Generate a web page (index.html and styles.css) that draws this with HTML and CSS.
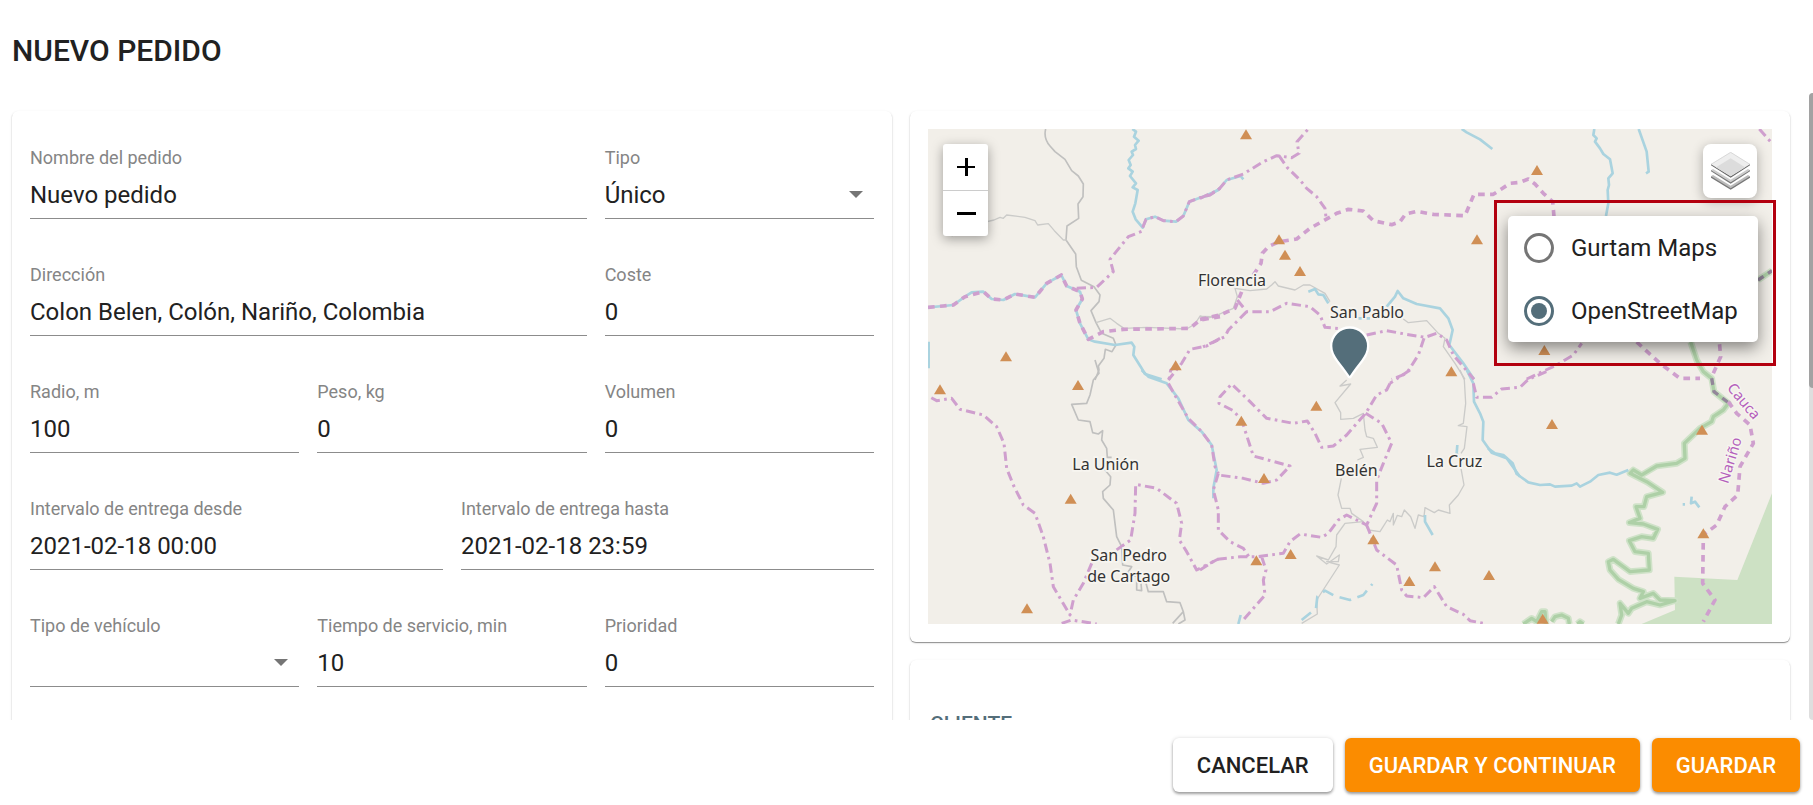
FILE: index.html
```html
<!DOCTYPE html>
<html lang="es">
<head>
<meta charset="utf-8">
<meta name="viewport" content="width=device-width, initial-scale=1">
<title>Nuevo pedido</title>
<link rel="stylesheet" href="styles.css">
</head>
<body class="page">
<header class="header"><h1 class="title">NUEVO PEDIDO</h1></header>
<main class="main">
  <div class="scroller">
    <form class="card form" id="order-form">
      <div class="row">
        <div class="field wide"><label for="name">Nombre del pedido</label><input id="name" type="text" value="Nuevo pedido"></div>
        <div class="field"><label for="type">Tipo</label><select id="type"><option>Único</option></select><svg class="arrow" viewBox="0 0 14 7"><path d="M0 0H14L7 7Z"/></svg></div>
      </div>
      <div class="row">
        <div class="field wide"><label for="address">Dirección</label><input id="address" type="text" value="Colon Belen, Colón, Nariño, Colombia"></div>
        <div class="field"><label for="cost">Coste</label><input id="cost" type="text" value="0"></div>
      </div>
      <div class="row">
        <div class="field"><label for="radius">Radio, m</label><input id="radius" type="text" value="100"></div>
        <div class="field"><label for="weight">Peso, kg</label><input id="weight" type="text" value="0"></div>
        <div class="field"><label for="volume">Volumen</label><input id="volume" type="text" value="0"></div>
      </div>
      <div class="row halves">
        <div class="field"><label for="from">Intervalo de entrega desde</label><input id="from" type="text" value="2021-02-18 00:00"></div>
        <div class="field"><label for="to">Intervalo de entrega hasta</label><input id="to" type="text" value="2021-02-18 23:59"></div>
      </div>
      <div class="row">
        <div class="field"><label for="vehicle">Tipo de vehículo</label><select id="vehicle"><option></option></select><svg class="arrow" viewBox="0 0 14 7"><path d="M0 0H14L7 7Z"/></svg></div>
        <div class="field"><label for="service">Tiempo de servicio, min</label><input id="service" type="text" value="10"></div>
        <div class="field"><label for="priority">Prioridad</label><input id="priority" type="text" value="0"></div>
      </div>
    </form>
    <div class="side">
      <section class="card">
        <div class="map">
          <svg class="tiles" viewBox="0 0 2532 1485" preserveAspectRatio="xMidYMid slice">
            <defs>
              <path id="peak" d="M0-16L18 14H-18Z"/>
              <path id="reserve" d="M602-84L620-30L640 5L665 25L672 65L715 100L700 120L670 140L665 155L630 175L583 220L585 265L560 280L500 288L455 315L430 300L420 310L470 335L518 367L470 380L462 410L438 410L450 445L418 458L460 462L503 478L490 505L455 500L418 512L435 545L475 550L478 600L420 605L370 568L355 575L360 600L385 628L430 655L460 665L450 685L490 670L510 690L555 692L510 705L470 695L425 715L415 730L390 700L395 735L385 762M100 762L125 745L140 755L155 725L165 725L168 762M185 755L195 740L215 735L235 745L238 762M262 762L270 755L280 762M804-270L846-298"/>
            </defs>

            <!-- park and green boundary -->
            <g transform="translate(1686 723)">
              <path class="park" d="M553 620L742 630L846 370V762H455L555 720Z"/>
              <use href="#reserve" class="halo"/>
              <use href="#reserve" class="core"/>
            </g>

            <!-- roads -->
            <g class="road">
              <g transform="translate(-84 -87)">
                <path class="major" d="M437 87Q430 115 450 138L465 155L495 178L515 212L535 228L550 252L549 290L534 312L536 355L501 378L498 420L527 462L529 500L544 541L582 560L600 585L597 605L573 632L588 668L605 700L640 715L648 735L636 755L616 748L612 775L595 798L597 810L585 840"/>
                <path d="M155 408L240 370L282 360L300 352L310 355L320 345L375 352L405 362L413 375L445 371L463 392L490 420H500M588 668L630 655L650 670L672 685L740 682L860 687L885 672L900 648L920 655L960 645"/>
              </g>
              <path transform="translate(816 -87)" d="M0 649L40 650L100 625L112 590L105 565L150 572L200 567L215 555L225 545L235 558L285 570L310 555L330 555L375 580L390 605M610 657L625 668L680 662L715 700L735 715L730 740L765 790L795 838"/>
              <path transform="translate(-84 723)" class="major" d="M585-30L597 10L580 30L570 75L560 100L515 103L535 150L570 155L578 188L595 192L608 182L605 210L620 235L622 262H635M615 300L632 320L630 345L608 365L610 385L640 420L650 500L665 530L668 585L695 590L685 605L710 620L710 660L725 662L723 640M738 640L745 665L790 665L800 695L840 698L850 725L855 750L835 762M850 725L818 760"/>
              <path transform="translate(816 723)" d="M440 30L420 48L452 42L405 98L422 128V148L460 145L490 130L495 180L500 200L520 205L532 232L480 238L490 262L472 270M780 0L793 30L797 100L790 160L775 167L801 170L793 235L783 250M783 295L792 345L775 375L748 405L750 430L715 420L703 428L675 413L672 440L655 435L645 475L632 440L613 420L605 440L592 436L580 465V430L570 455L562 450L540 485L505 480L490 455L455 430L450 415H425L414 375L424 325M490 455L435 460L410 495L408 530L385 570L350 558L380 582L418 555L415 575L380 575L418 585L350 690L352 732L305 760"/>
            </g>

            <!-- rivers -->
            <g class="river">
              <path transform="translate(-84 -87)" d="M697 87L708 95L702 110L716 122L705 135L708 147L695 155L699 165L686 180L692 195L685 205L698 215L690 228L708 250L698 262L713 270L706 310L698 335L707 358L728 383L738 358L765 350L790 362L828 365L850 348L868 305L900 293L930 285L960 265M84 622L130 618L160 615L195 590L215 577L250 575L275 597L310 600L345 582L405 592L440 550L484 525L500 558L540 575L547 597L528 630L540 670L565 718L585 725L645 735L695 728L703 740L700 765L722 800L735 822L785 838M86 725V805"/>
              <path transform="translate(816 -87)" d="M0 295L55 270L80 240L122 228L130 238M785 87L800 97L840 118L877 147M325 575L345 567L355 583L370 585L385 610M475 655H510M560 620L585 590L593 573L610 595L650 612L720 625L745 655L758 690L748 735L790 790L822 838"/>
              <path transform="translate(1656 -147)" d="M343 147L340 165L350 175L345 185L360 205L370 222L390 238L398 280L385 295L387 315L383 330L385 370L378 408M476 147L500 215L506 275L498 280"/>
              <path transform="translate(-84 723)" d="M725 0L745 20L800 40L835 85L865 150L905 185L935 225L950 300L940 355V385"/>
              <path transform="translate(816 723)" d="M800 0L820 40L822 95L840 130L850 155L848 210L875 248L920 265L960 320M122 735L115 762M675 435V455L698 495M772 225L770 250L785 280"/>
              <path transform="translate(816 723)" class="seasonal" d="M305 750L348 715L352 680L375 662L405 678L450 690L490 675L517 642"/>
              <path transform="translate(1686 723)" d="M-6 235L15 250L40 255L68 280L80 312L115 337L150 345L180 343L195 350L245 347L260 340L270 350L300 335L325 315L360 308L380 314L415 300M605 380L603 400L615 395L628 412M578 403H585"/>
            </g>

            <!-- municipal boundaries -->
            <g class="border">
              <path transform="translate(-84 -87)" d="M728 383L738 358L765 350L790 362L828 365L850 348L868 305L900 293L930 285L960 265M530 565L590 562L640 515L630 478L685 410L728 393M960 715L920 738L870 748L845 790L805 840"/>
              <path transform="translate(816 -87)" d="M0 295L55 270L80 240L130 222L190 185L230 167L275 173L297 160L291 125L325 87M237 167L262 203L300 240L320 265L350 290L375 325L378 352M112 600L140 635L210 635L260 610L330 620L360 645L375 682L420 686M500 705L560 692L620 703L675 712L710 700L740 720L760 765L822 838M140 635L85 690L75 710L0 745M672 715L655 765L620 820L575 838"/>
              <path transform="translate(1656 -147)" d="M140 897L230 855L280 825L305 790M838 147L876 190"/>
              <path transform="translate(-84 723)" d="M830-10L812 0L805 40L830 85L865 145L905 185L935 225L945 290L955 310M955 567L890 600L860 545L838 510L845 460L830 400L770 355L707 343L705 430L692 510L635 550M575 580L550 640L520 690L510 735L460 650L450 580L430 500L405 430L370 405L340 345L320 295L312 220L290 170L250 135L180 118L155 85L110 92L88 80M485 760L515 750L590 762"/>
              <path transform="translate(816 723)" d="M55 310L40 360L55 420V480L90 515L130 535L150 565M570 40L560 60L530 75L497 130L440 195L400 228L365 232L345 190L322 153L280 160L200 145L150 95L95 42L60 80L57 100L100 122L125 150L160 258L270 288L230 330L190 340L130 325L55 315M630 0L570 40M497 130L545 160L575 220L550 280L530 330V400L500 465L440 435L415 450L385 490L365 502L300 492L270 515L250 550L170 560L120 560L50 568L0 600M500 465L530 540L590 585L605 660L620 678L670 683L703 650L740 710L790 733L810 752L860 762M185 560L198 600L190 630L195 675L130 750M820 40L830 82L875 82L905 57L960 52L985 28L1050 0"/>
            </g>
            <g class="border province">
              <path transform="translate(-84 -87)" d="M84 622L130 618L160 615L195 590L250 575L275 597L310 600L345 582L405 592L440 550L484 525L500 558L540 575L547 597L528 630L540 670L565 718L610 695L670 688L870 685L900 660L960 650"/>
              <path transform="translate(816 -87)" d="M0 658L60 645L105 625L127 570M160 525L183 490L187 460L205 440L237 425L290 417L330 385L410 340L445 328L490 333L520 362L575 374L600 365L617 342L650 334L700 343L795 347L822 283L880 283L930 250L960 247L985 237L1005 252L1030 280L1058 305L1062 350"/>
              <path transform="translate(1656 -147)" d="M470 786L540 850L600 895L660 895M700 880L722 830L718 786"/>
              <path transform="translate(1686 723)" d="M715 95L740 130L780 165L790 220L750 290L743 375L705 410L680 465L640 495L638 640L675 690L640 755"/>
            </g>
            <path class="edge" d="M2351 748L2358 788L2400 820M2490 453L2532 425"/>

            <g class="peaks">
              <use href="#peak" x="234" y="683"/><use href="#peak" x="743" y="710"/>
              <use href="#peak" x="954" y="17"/><use href="#peak" x="1053" y="332"/><use href="#peak" x="1071" y="378"/><use href="#peak" x="1116" y="427"/><use href="#peak" x="1647" y="332"/><use href="#peak" x="1570" y="728"/>
              <use href="#peak" x="1827" y="124"/><use href="#peak" x="1849" y="664"/>
              <use href="#peak" x="36" y="782"/><use href="#peak" x="450" y="769"/><use href="#peak" x="428" y="1110"/><use href="#peak" x="297" y="1439"/>
              <use href="#peak" x="1165" y="831"/><use href="#peak" x="940" y="876"/><use href="#peak" x="1008" y="1048"/><use href="#peak" x="985" y="1295"/><use href="#peak" x="1088" y="1276"/><use href="#peak" x="1336" y="1232"/><use href="#peak" x="1444" y="1357"/><use href="#peak" x="1521" y="1313"/><use href="#peak" x="1683" y="1339"/>
              <use href="#peak" x="1872" y="886"/><use href="#peak" x="2322" y="903"/><use href="#peak" x="2326" y="1214"/><use href="#peak" x="1844" y="1470"/>
            </g>

            <g class="places">
              <text x="912" y="470">Florencia</text>
              <text x="1317" y="567">San Pablo</text>
              <text x="533" y="1023">La Unión</text>
              <text x="1285" y="1041">Belén</text>
              <text x="1579" y="1013">La Cruz</text>
              <text x="602" y="1296">San Pedro</text>
              <text x="602" y="1360">de Cartago</text>
            </g>
            <g class="regions">
              <text transform="translate(2436 826) rotate(50)">Cauca</text>
              <text transform="translate(2421 998) rotate(-73)">Nariño</text>
            </g>
            <path class="pin" d="M1265 741C1240 702 1213 682 1213 651a52 52 0 0 1 104 0C1317 682 1290 702 1265 741Z"/>
          </svg>
          <div class="zoom">
            <button type="button" aria-label="Acercar"><svg viewBox="0 0 18 18"><path d="M0 8H18V10H0ZM8 0H11V18H8Z"/></svg></button>
            <button type="button" aria-label="Alejar"><svg viewBox="0 0 18 18"><path d="M0 7H19V10H0Z"/></svg></button>
          </div>
          <button class="layers" type="button" aria-label="Capas">
            <svg viewBox="0 0 117 113">
              <path fill="#777" d="M0 77L59 113L117 77V73H0Z"/><path fill="#bbb" d="M59 36L117 73L59 109L0 73Z"/>
              <path fill="#fff" d="M0 65L59 101L117 65V58H0Z"/>
              <path fill="#777" d="M0 58L59 95L117 58V54H0Z"/><path fill="#ccc" d="M59 18L117 55L59 91L0 55Z"/>
              <path fill="#fff" d="M0 47L59 83L117 47V40H0Z"/>
              <path fill="#666" d="M0 40L59 77L117 40V36H0Z"/><path fill="#eee" d="M59 0L117 37L59 73L0 37Z"/>
              <path fill="#dcdcdc" d="M59 19L102 46L59 73L15 46Z"/>
              <path fill="none" stroke="#ccc" stroke-width="2" d="M0 37L59 1L117 37"/>
            </svg>
          </button>
          <div class="callout">
            <div class="menu">
              <label><input type="radio" name="layer">Gurtam Maps</label>
              <label><input type="radio" name="layer" checked>OpenStreetMap</label>
            </div>
          </div>
        </div>
      </section>
      <section class="card client"><h2 class="subtitle">CLIENTE</h2></section>
    </div>
  </div>
  <div class="scrollbar"><div class="thumb"></div></div>
</main>
<footer class="footer">
  <button class="button" type="button">CANCELAR</button>
  <button class="button primary" type="button">GUARDAR Y CONTINUAR</button>
  <button class="button primary" type="submit" form="order-form">GUARDAR</button>
</footer>
</body>
</html>
```

FILE: styles.css
```css
* { box-sizing: border-box; }

.page {
  display: flex;
  flex-direction: column;
  height: 100vh;
  margin: 0;
  overflow: hidden;
  background: #fff;
  color: #212121;
  font-family: Roboto, "Liberation Sans", sans-serif;
  font-size: 24px;
}

.header { padding: 31px 12px 22px; }
.title { margin: 0; font-size: 30px; font-weight: 500; line-height: 40px; }

.main { display: flex; flex: 1; min-height: 0; }
.scroller {
  display: grid;
  flex: 1;
  grid-template-columns: 1fr 1fr;
  gap: 18px;
  padding: 18px 19px 18px 12px;
  overflow-y: auto;
  scrollbar-width: none;
}
.scrollbar { width: 4px; border-radius: 4px 0 0 4px; background: #dedede; }
.thumb { height: 47%; border-radius: 4px 0 0 4px; background: #a2a2a2; }

.card {
  padding: 18px;
  border-radius: 6px;
  background: #fff;
  box-shadow: 0 1px 1px rgba(0, 0, 0, .4), 0 1px 3px rgba(0, 0, 0, .1);
}
.side { display: flex; flex-direction: column; gap: 18px; }
.client { min-height: 420px; }
.subtitle { margin: 32px 2px 0; color: #546e7a; font-size: 21px; font-weight: 500; line-height: 28px; }

.form { display: flex; flex-direction: column; gap: 33px; min-height: 900px; padding-top: 24px; }
.row { display: grid; grid-template-columns: repeat(3, 1fr); gap: 18px; }
.halves { grid-template-columns: 1fr 1fr; }
.wide { grid-column: span 2; }
.field {
  display: grid;
  grid-template-rows: 36px 47px;
  min-width: 0;
  border-bottom: 1px solid #8c8c8c;
}
.field label { padding-top: 11px; color: #858585; font-size: 18px; line-height: 24px; }
.field input, .field select {
  grid-area: 2 / 1;
  width: 100%;
  margin: 0;
  padding: 0;
  border: 0;
  outline: 0;
  appearance: none;
  background: none;
  color: #212121;
  font: inherit;
}
.field input { padding-top: 1px; }
.arrow { grid-area: 2 / 1; align-self: center; justify-self: end; width: 14px; margin-right: 11px; fill: #757575; pointer-events: none; }

.map { position: relative; aspect-ratio: 844 / 495; background: #f2efe9; }
.tiles { display: block; width: 100%; height: 100%; }
.tiles path { stroke-linejoin: round; }
.park { fill: #cde1c4; }
.halo { fill: none; stroke: #cfe2c8; stroke-width: 20; }
.core { fill: none; stroke: #aed0a7; stroke-width: 10; }
.road { fill: none; stroke: #cbcbc9; stroke-width: 4; }
.major { stroke: #c0c0bf; stroke-width: 5; }
.river { fill: none; stroke: #aad3df; stroke-width: 8; }
.seasonal { stroke-dasharray: 36 20; }
.border { fill: none; stroke: #cf9fce; stroke-width: 9; stroke-dasharray: 28 13 8 13; }
.province { stroke-width: 11; stroke-dasharray: 20 16; }
.edge { fill: none; stroke: #93869a; stroke-width: 10; stroke-dasharray: 20 16; }
.peaks { fill: #d08f55; }
.places, .regions { stroke: #f7f5f0; paint-order: stroke; text-anchor: middle; }
.places { fill: #333; stroke-width: 10; font: 48px "Noto Sans", sans-serif; }
.regions { fill: #b45fbc; stroke-width: 8; font: 44px "Noto Sans", sans-serif; }
.pin { fill: #546e7a; stroke: #fff; stroke-width: 14; paint-order: stroke; }

.zoom {
  position: absolute;
  top: 15px;
  left: 15px;
  width: 45px;
  border-radius: 3px;
  background: #fff;
  box-shadow: 0 3px 12px rgba(0, 0, 0, .35);
}
.zoom button {
  display: flex;
  align-items: center;
  justify-content: center;
  width: 100%;
  height: 46px;
  padding: 0;
  border: 0;
  background: none;
}
.zoom button + button { border-top: 1px solid #ccc; }
.zoom svg { width: 18px; overflow: visible; }

.layers {
  position: absolute;
  top: 15px;
  right: 15px;
  display: flex;
  align-items: center;
  justify-content: center;
  width: 54px;
  height: 54px;
  padding: 0;
  border: 0;
  border-radius: 8px;
  background: #fff;
  box-shadow: 0 3px 12px rgba(0, 0, 0, .3);
}
.layers svg { width: 39px; }

.callout {
  position: absolute;
  top: 71px;
  right: -4px;
  padding: 13px 15px 21px 11px;
  border: 3px solid #b3000f;
}
.menu { width: 250px; border-radius: 5px; background: #fff; box-shadow: 0 6px 16px rgba(0, 0, 0, .45); }
.menu label { display: flex; align-items: center; gap: 17px; height: 63px; padding: 0 16px; white-space: nowrap; }
.menu input {
  display: grid;
  place-items: center;
  width: 30px;
  height: 30px;
  margin: 0;
  border: 3px solid #757575;
  border-radius: 50%;
  appearance: none;
}
.menu input:checked { border-color: #546e7a; }
.menu input:checked::before { content: ""; width: 16px; height: 16px; border-radius: 50%; background: #546e7a; }

.footer { display: flex; justify-content: flex-end; gap: 12px; padding: 18px 13px 13px; }
.button {
  height: 54px;
  padding: 0 24px;
  border: 0;
  border-radius: 6px;
  background: #fff;
  color: #212121;
  box-shadow: 0 2px 3px rgba(0, 0, 0, .35), 0 0 4px rgba(0, 0, 0, .12);
  font: 500 22px Roboto, "Liberation Sans", sans-serif;
}
.primary { background: #fb8c00; color: #fff; }
```
